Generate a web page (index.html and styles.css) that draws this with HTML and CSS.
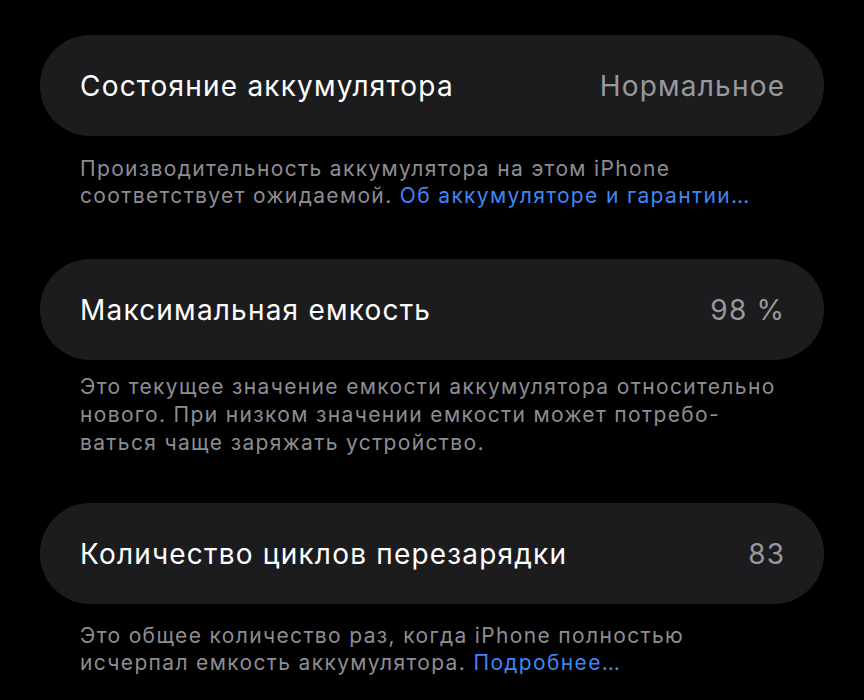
FILE: index.html
```html
<!DOCTYPE html>
<html lang="ru">
<head>
<meta charset="utf-8">
<link rel="stylesheet" href="styles.css">
</head>
<body>
<main class="page">
  <section class="group g1">
    <div class="card">
      <span class="label">Состояние аккумулятора</span>
      <span class="value">Нормальное</span>
    </div>
    <p class="note">Производительность аккумулятора на этом iPhone<br>соответствует ожидаемой. <span class="link">Об аккумуляторе и гарантии…</span></p>
  </section>
  <section class="group g2">
    <div class="card">
      <span class="label">Максимальная емкость</span>
      <span class="value">98 %</span>
    </div>
    <p class="note">Это текущее значение емкости аккумулятора относительно<br>нового. При низком значении емкости может потребо-<br>ваться чаще заряжать устройство.</p>
  </section>
  <section class="group g3">
    <div class="card">
      <span class="label">Количество циклов перезарядки</span>
      <span class="value">83</span>
    </div>
    <p class="note">Это общее количество раз, когда iPhone полностью<br>исчерпал емкость аккумулятора. <span class="link">Подробнее…</span></p>
  </section>
</main>
</body>
</html>
```
FILE: styles.css
```css
html, body {
  margin: 0;
  padding: 0;
  background: #000;
}
body {
  font-family: Inter, "Noto Sans", sans-serif;
  width: 864px;
  height: 700px;
  overflow: hidden;
}
.page {
  padding: 35px 40px 0 40px;
  display: flex;
  flex-direction: column;
}
.group {
  display: flex;
  flex-direction: column;
}
.g1 { margin-bottom: 49px; }
.g2 { margin-bottom: 46px; }
.card {
  height: 101px;
  box-sizing: border-box;
  background: #1c1c1e;
  border-radius: 50px;
  display: flex;
  align-items: center;
  justify-content: space-between;
  padding: 0 40px;
  font-size: 28px;
  letter-spacing: 1.2px;
}
.label { color: #fff; }
.value { color: #98989e; margin-right: -1.2px; }
.note {
  margin: 0;
  padding: 18.5px 40px 0 40px;
  font-size: 21px;
  line-height: 27.5px;
  color: #8d8d93;
  letter-spacing: 1.35px;
}
.g2 .card { padding-top: 2px; }
.g2 .note { padding-top: 13.5px; line-height: 28px; }
.g3 .note { padding-top: 17.5px; }
.link { color: #3f86f3; }
```
